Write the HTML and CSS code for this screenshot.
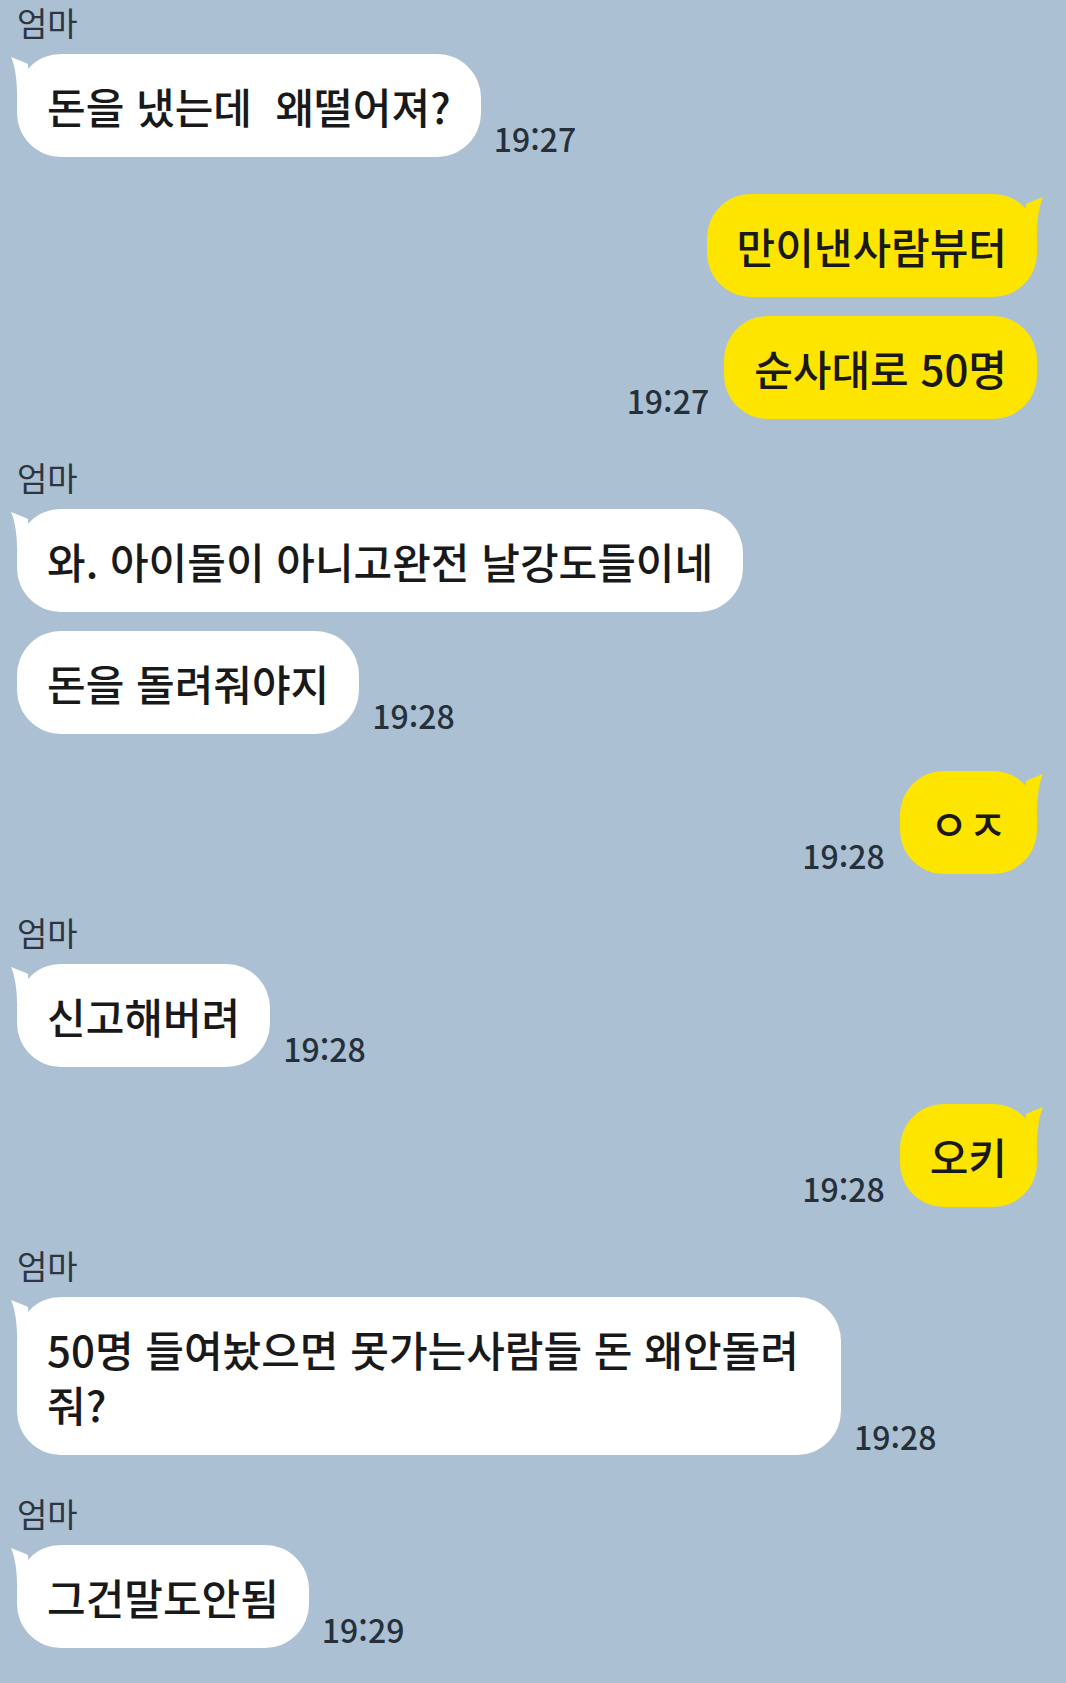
FILE: index.html
```html
<!DOCTYPE html>
<html lang="ko">
<head>
    <meta charset="UTF-8">
    <meta name="viewport" content="width=device-width, initial-scale=1.0">
    <title>엄마</title>
    <link rel="stylesheet" href="styles.css">
</head>
<body>
    <div class="chat">
        <!-- 엄마 -->
        <div class="group in">
            <div class="name">엄마</div>
            <div class="row">
                <div class="bubble">
                    <svg class="tail" viewBox="0 0 24 40"><path d="M0 3C6 5 12 8 17 10L18 40L6 40C6 26 4 12 0 3Z"/></svg>
                    돈을 냈는데&nbsp; 왜떨어져?
                </div>
                <span class="time">19:27</span>
            </div>
        </div>

        <!-- 나 -->
        <div class="group out">
            <div class="row">
                <div class="bubble">
                    <svg class="tail" viewBox="0 0 24 40"><path d="M0 3C6 5 12 8 17 10L18 40L6 40C6 26 4 12 0 3Z"/></svg>
                    만이낸사람뷰터
                </div>
            </div>
            <div class="row">
                <span class="time">19:27</span>
                <div class="bubble">순사대로 50명</div>
            </div>
        </div>

        <div class="group in">
            <div class="name">엄마</div>
            <div class="row">
                <div class="bubble">
                    <svg class="tail" viewBox="0 0 24 40"><path d="M0 3C6 5 12 8 17 10L18 40L6 40C6 26 4 12 0 3Z"/></svg>
                    와. 아이돌이 아니고완전 날강도들이네
                </div>
            </div>
            <div class="row">
                <div class="bubble">돈을 돌려줘야지</div>
                <span class="time">19:28</span>
            </div>
        </div>

        <div class="group out">
            <div class="row">
                <span class="time">19:28</span>
                <div class="bubble">
                    <svg class="tail" viewBox="0 0 24 40"><path d="M0 3C6 5 12 8 17 10L18 40L6 40C6 26 4 12 0 3Z"/></svg>
                    ㅇㅈ
                </div>
            </div>
        </div>

        <div class="group in">
            <div class="name">엄마</div>
            <div class="row">
                <div class="bubble">
                    <svg class="tail" viewBox="0 0 24 40"><path d="M0 3C6 5 12 8 17 10L18 40L6 40C6 26 4 12 0 3Z"/></svg>
                    신고해버려
                </div>
                <span class="time">19:28</span>
            </div>
        </div>

        <div class="group out">
            <div class="row">
                <span class="time">19:28</span>
                <div class="bubble">
                    <svg class="tail" viewBox="0 0 24 40"><path d="M0 3C6 5 12 8 17 10L18 40L6 40C6 26 4 12 0 3Z"/></svg>
                    오키
                </div>
            </div>
        </div>

        <div class="group in">
            <div class="name">엄마</div>
            <div class="row">
                <div class="bubble">
                    <svg class="tail" viewBox="0 0 24 40"><path d="M0 3C6 5 12 8 17 10L18 40L6 40C6 26 4 12 0 3Z"/></svg>
                    50명 들여놨으면 못가는사람들 돈 왜안돌려줘?
                </div>
                <span class="time">19:28</span>
            </div>
        </div>

        <div class="group in">
            <div class="name">엄마</div>
            <div class="row">
                <div class="bubble">
                    <svg class="tail" viewBox="0 0 24 40"><path d="M0 3C6 5 12 8 17 10L18 40L6 40C6 26 4 12 0 3Z"/></svg>
                    그건말도안됨
                </div>
                <span class="time">19:29</span>
            </div>
        </div>
    </div>
</body>
</html>
```

FILE: styles.css
```css
body {
    margin: 0;
    background-color: #abc1d3;
    font-family: "Noto Sans CJK KR", "Noto Sans", sans-serif;
}
.chat {
    display: flex;
    flex-direction: column;
    padding: 4px 29px 40px 17px;
}
.group {
    display: flex;
    flex-direction: column;
    gap: 19px;
}
.group.in {
    margin-top: 40px;
    align-items: flex-start;
}
.group.out {
    margin-top: 37px;
    align-items: flex-end;
}
.group:first-child {
    margin-top: 0;
}
.name {
    font-size: 33px;
    line-height: 36px;
    color: #2d3540;
    margin-bottom: -5px;
}
.row {
    display: flex;
    align-items: flex-end;
    gap: 13px;
}
.out .row {
    gap: 15px;
}
.bubble {
    position: relative;
    box-sizing: border-box;
    max-width: 824px;
    padding: 24px 30px;
    border-radius: 44px;
    background-color: #ffffff;
    color: #191919;
    font-size: 42px;
    line-height: 55px;
    font-weight: 500;
}
.out .bubble {
    background-color: #fee500;
}
.tail {
    position: absolute;
    top: 0;
    left: -6px;
    width: 24px;
    height: 40px;
    fill: #ffffff;
}
.out .tail {
    left: auto;
    right: -6px;
    transform: scaleX(-1);
    fill: #fee500;
}
.time {
    flex-shrink: 0;
    margin-bottom: 3px;
    font-size: 32px;
    line-height: 1;
    font-weight: 500;
    color: #26303b;
}
```
